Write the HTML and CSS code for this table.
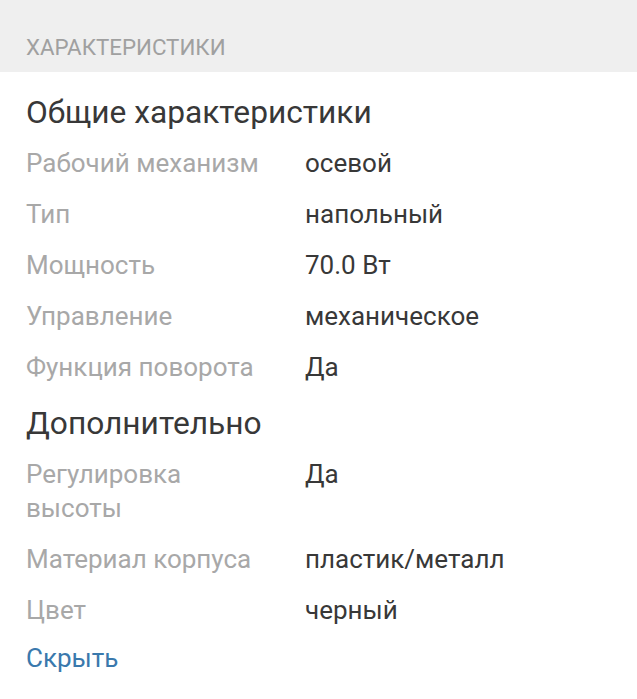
FILE: index.html
```html
<!DOCTYPE html>
<html lang="ru">
<head>
<meta charset="utf-8">
<title>Характеристики</title>
<link rel="stylesheet" href="styles.css">
</head>
<body>
<div class="page">
  <div class="header">ХАРАКТЕРИСТИКИ</div>
  <div class="content">
    <h2 class="group-title">Общие характеристики</h2>
    <dl class="specs">
      <div class="row"><dt>Рабочий механизм</dt><dd>осевой</dd></div>
      <div class="row"><dt>Тип</dt><dd>напольный</dd></div>
      <div class="row"><dt>Мощность</dt><dd>70.0 Вт</dd></div>
      <div class="row"><dt>Управление</dt><dd>механическое</dd></div>
      <div class="row"><dt>Функция поворота</dt><dd>Да</dd></div>
    </dl>
    <h2 class="group-title">Дополнительно</h2>
    <dl class="specs">
      <div class="row"><dt>Регулировка высоты</dt><dd>Да</dd></div>
      <div class="row"><dt>Материал корпуса</dt><dd>пластик/металл</dd></div>
      <div class="row"><dt>Цвет</dt><dd>черный</dd></div>
    </dl>
    <a class="toggle" href="#">Скрыть</a>
  </div>
</div>
</body>
</html>
```
FILE: styles.css
```css
html, body {
  margin: 0;
  padding: 0;
  background: #ffffff;
}
body {
  font-family: Roboto, "Noto Sans", sans-serif;
}
.page {
  width: 637px;
}
.header {
  background: #efefef;
  height: 72px;
  box-sizing: border-box;
  padding: 33px 26px 0;
  font-size: 22.3px;
  line-height: 28px;
  color: #a0a0a0;
}
.content {
  padding: 0 26px;
}
.group-title {
  margin: 0;
  font-weight: 400;
  font-size: 31.7px;
  line-height: 40px;
  color: #383838;
  padding: 12px 0 4px;
}
.content > .group-title:first-child {
  padding-top: 21px;
}
.specs {
  margin: 0;
}
.row {
  display: grid;
  grid-template-columns: 250px 1fr;
  column-gap: 29px;
  padding: 8.5px 0;
  font-size: 26px;
  line-height: 34px;
}
.row dt {
  color: #a8a8a8;
}
.row dd {
  margin: 0;
  color: #383838;
}
.toggle {
  display: block;
  padding-top: 6px;
  font-size: 26px;
  line-height: 34px;
  color: #3a79ad;
  text-decoration: none;
}
```
